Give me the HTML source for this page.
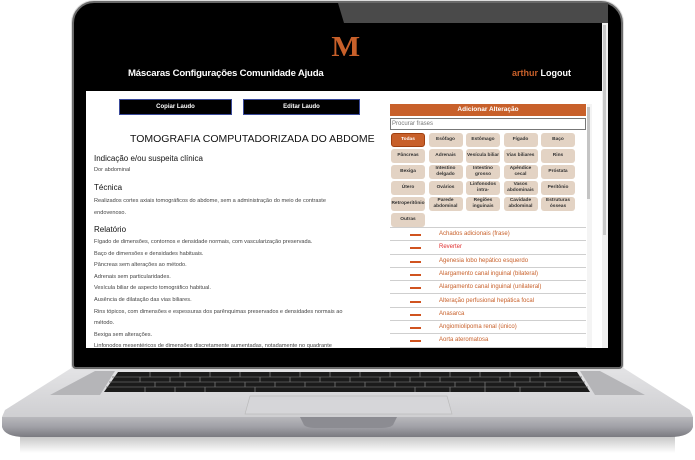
<!DOCTYPE html>
<html><head><meta charset="utf-8"><style>
*{margin:0;padding:0;box-sizing:border-box}
body{width:695px;height:460px;background:#fff;position:relative;overflow:hidden;font-family:"Liberation Sans",Arial,sans-serif}
.abs{position:absolute}
#lid{left:72px;top:1px;width:551px;height:368px;border-radius:22px 22px 4px 4px;background:#000;border:2px solid #6a6a6a;box-shadow:0 0 0 1px #ddd}
#gloss{left:338px;top:3px;width:270px;height:20px;background:#4a4a4a;clip-path:polygon(0 0,100% 0,100% 100%,6px 100%)}
#screen{left:86px;top:23px;width:522px;height:325px;background:#fff;overflow:hidden}
#hdr{left:0;top:0;width:522px;height:68px;background:#000}
.M{left:246px;top:8px;font-family:"Liberation Serif",serif;font-weight:bold;font-size:29px;color:#c8602a;transform:scaleX(1.05)}
.nav{left:42px;top:45px;color:#fff;font-size:9.6px;font-weight:bold;letter-spacing:-0.2px}
.usr{left:426px;top:45px;font-size:9px;font-weight:bold;color:#c8602a}
.usr b{color:#fff}
.btn{top:76px;height:16px;background:#000;border:1px solid #3a4a9a;color:#fff;font-size:6px;font-weight:bold;text-align:center;line-height:14px}
.t{color:#222;white-space:nowrap}
.title{left:44px;top:110px;font-size:10.5px;color:#111}
.h{font-size:8px;color:#111}
.p{font-size:5.6px;color:#444}
.bar{left:304px;top:81px;width:196px;height:12px;background:#c8602a;color:#fff;font-size:6.5px;font-weight:bold;text-align:center;line-height:12px}
.srch{left:304px;top:95px;width:196px;height:12px;border:1px solid #777;font-size:6px;color:#777;padding-left:1px;line-height:10px}
.chip{width:34px;height:14px;background:#e3d3c4;border-radius:3px;font-size:4.8px;color:#333;text-align:center;display:flex;align-items:center;justify-content:center;line-height:6px;font-weight:bold}
.row{left:304px;width:196px;height:13.3px;border-bottom:1px solid #cfcfcf;font-size:6px;color:#c8602a}
.row i{position:absolute;left:20px;top:6px;width:11px;height:2px;background:#d0531f}
.row span{position:absolute;left:49px;top:3px}
</style></head><body>
<svg class="abs" style="left:0;top:355px" width="695" height="105">
<defs>
<linearGradient id="bs" x1="0" y1="0" x2="0" y2="1"><stop offset="0" stop-color="#e4e4e6"/><stop offset="1" stop-color="#cfcfd2"/></linearGradient>
<linearGradient id="lp" x1="0" y1="0" x2="0" y2="1"><stop offset="0" stop-color="#b8b8bc"/><stop offset="0.5" stop-color="#a0a0a6"/><stop offset="1" stop-color="#7a7a80"/></linearGradient>
<linearGradient id="sh" x1="0" y1="0" x2="0" y2="1"><stop offset="0" stop-color="#bbb"/><stop offset="1" stop-color="#fff"/></linearGradient>
</defs>
<rect x="20" y="78" width="655" height="20" fill="url(#sh)"/>
<path d="M73 12 L622 12 L690 55 L693 62 L2 62 L5 55 Z" fill="url(#bs)"/>
<path d="M2 62 L693 62 L693 72 Q690 82 670 82 L25 82 Q5 82 2 72 Z" fill="url(#lp)"/>
<path d="M118 17 L577 17 L590 37 L104 37 Z" fill="#1b1b1b"/>
<path d="M50 40 L95 16 L115 16 L100 40 Z" fill="#b5b5b8"/>
<path d="M595 40 L580 16 L600 16 L645 40 Z" fill="#b5b5b8"/>
<g stroke="#666" stroke-width="0.8"><path d="M112 22 L582 22 M109 27 L585 27 M106 32 L588 32"/></g>
<g stroke="#777" stroke-width="0.8">
<path d="M150 17v5 M180 17v5 M210 17v5 M240 17v5 M270 17v5 M300 17v5 M330 17v5 M360 17v5 M390 17v5 M420 17v5 M450 17v5 M480 17v5 M510 17v5 M540 17v5"/>
<path d="M140 22v5 M170 22v5 M200 22v5 M230 22v5 M260 22v5 M290 22v5 M320 22v5 M350 22v5 M380 22v5 M410 22v5 M440 22v5 M470 22v5 M500 22v5 M530 22v5 M560 22v5"/>
<path d="M155 27v5 M185 27v5 M215 27v5 M245 27v5 M275 27v5 M305 27v5 M335 27v5 M365 27v5 M395 27v5 M425 27v5 M455 27v5 M485 27v5 M515 27v5 M545 27v5"/>
<path d="M145 32v5 M175 32v5 M205 32v5 M255 32v5 M415 32v5 M450 32v5 M485 32v5 M520 32v5"/>
</g>
<path d="M250 41 L447 41 L452 59 L245 59 Z" fill="#d6d6d9" stroke="#bbb" stroke-width="0.7"/>
<path d="M300 62 L397 62 L393 70 Q390 73 380 73 L317 73 Q307 73 304 70 Z" fill="#8c8c92"/>
</svg>
<div id="lid" class="abs"></div>
<div id="gloss" class="abs"></div>
<div id="screen" class="abs">
 <div id="hdr" class="abs">
  <div class="abs M">M</div>
  <div class="abs nav">Máscaras Configurações Comunidade Ajuda</div>
  <div class="abs usr">arthur <b>Logout</b></div>
 </div>
 <div class="abs btn" style="left:33px;width:113px">Copiar Laudo</div>
 <div class="abs btn" style="left:157px;width:117px">Editar Laudo</div>
 <div class="abs t title">TOMOGRAFIA COMPUTADORIZADA DO ABDOME</div>
 <div class="abs t h" style="left:8px;top:131px">Indicação e/ou suspeita clínica</div>
 <div class="abs t p" style="left:8px;top:144px">Dor abdominal</div>
 <div class="abs t h" style="left:8px;top:160px">Técnica</div>
 <div class="abs t p" style="left:8px;top:173px;line-height:11.5px">Realizados cortes axiais tomográficos do abdome, sem a administração do meio de contraste<br>endovenoso.</div>
 <div class="abs t h" style="left:8px;top:202px">Relatório</div>
 <div class="abs t p" style="left:8px;top:214px;line-height:11.6px">Fígado de dimensões, contornos e densidade normais, com vascularização preservada.<br>Baço de dimensões e densidades habituais.<br>Pâncreas sem alterações ao método.<br>Adrenais sem particularidades.<br>Vesícula biliar de aspecto tomográfico habitual.<br>Ausência de dilatação das vias biliares.<br>Rins tópicos, com dimensões e espessuras dos parênquimas preservados e densidades normais ao<br>método.<br>Bexiga sem alterações.<br>Linfonodos mesentéricos de dimensões discretamente aumentadas, notadamente no quadrante</div>
 <div class="abs bar">Adicionar Alteração</div>
 <div class="abs srch">Procurar frases</div>
 <div class="abs" style="left:304px;top:110px;width:196px;display:grid;grid-template-columns:repeat(5,34px);column-gap:3.5px;row-gap:2px;padding-left:1px">
  <div class="chip" style="background:#c8602a;color:#fff;border:1px solid #a04010">Todas</div><div class="chip">Esôfago</div><div class="chip">Estômago</div><div class="chip">Fígado</div><div class="chip">Baço</div>
  <div class="chip">Pâncreas</div><div class="chip">Adrenais</div><div class="chip">Vesícula biliar</div><div class="chip">Vias biliares</div><div class="chip">Rins</div>
  <div class="chip">Bexiga</div><div class="chip">Intestino delgado</div><div class="chip">Intestino grosso</div><div class="chip">Apêndice cecal</div><div class="chip">Próstata</div>
  <div class="chip">Útero</div><div class="chip">Ovários</div><div class="chip">Linfonodos intra-</div><div class="chip">Vasos abdominais</div><div class="chip">Peritônio</div>
  <div class="chip">Retroperitônio</div><div class="chip">Parede abdominal</div><div class="chip">Regiões inguinais</div><div class="chip">Cavidade abdominal</div><div class="chip">Estruturas ósseas</div>
  <div class="chip">Outras</div>
 </div>
 <div class="abs" style="left:304px;top:204px;width:196px;border-top:1px solid #cfcfcf"></div>
 <div class="abs row" style="top:205px"><i></i><span>Achados adicionais (frase)</span></div>
 <div class="abs row" style="top:218.3px"><i></i><span style="color:#e03030">Reverter</span></div>
 <div class="abs row" style="top:231.6px"><i></i><span>Agenesia lobo hepático esquerdo</span></div>
 <div class="abs row" style="top:244.9px"><i></i><span>Alargamento canal inguinal (bilateral)</span></div>
 <div class="abs row" style="top:258.2px"><i></i><span>Alargamento canal inguinal (unilateral)</span></div>
 <div class="abs row" style="top:271.5px"><i></i><span>Alteração perfusional hepática focal</span></div>
 <div class="abs row" style="top:284.8px"><i></i><span>Anasarca</span></div>
 <div class="abs row" style="top:298.1px"><i></i><span>Angiomiolipoma renal (único)</span></div>
 <div class="abs row" style="top:311.4px"><i></i><span>Aorta ateromatosa</span></div>
 <div class="abs" style="left:501px;top:81px;width:5px;height:244px;background:#f4f4f4"></div>
 <div class="abs" style="left:501px;top:84px;width:3px;height:92px;background:#c4c4c4"></div>
 <div class="abs" style="left:516px;top:0;width:6px;height:325px;background:#f0f0f0"></div>
 <div class="abs" style="left:517px;top:2px;width:3px;height:210px;background:#c8c8c8"></div>
</div>
</body></html>
